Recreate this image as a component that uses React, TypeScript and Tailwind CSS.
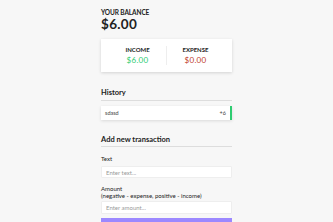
import React from 'react'

const App = () => {
  return (
    <div className="min-h-screen bg-[#f7f7f7] font-['Lato','Liberation_Sans',sans-serif] text-[#222]">
      <div className="mx-auto w-[131px] pt-[9px] pb-[10px]">
        <h4 className="text-[6.5px] font-bold uppercase leading-[8px] tracking-[-0.1px]">Your Balance</h4>
        <h1 className="text-[13.5px] font-bold leading-[14px] tracking-[0.3px]">$6.00</h1>

        <div className="mt-[8px] flex bg-white px-[8px] py-[7px] shadow-[0_1px_3px_rgba(0,0,0,0.15)]">
          <div className="flex-1 border-r border-[#eee] text-center">
            <h4 className="text-[6px] font-bold uppercase leading-[8px]">Income</h4>
            <p className="mt-[1px] text-[8px] leading-[10px] tracking-[0.3px] text-[#2ecc71]">$6.00</p>
          </div>
          <div className="flex-1 text-center">
            <h4 className="text-[6px] font-bold uppercase leading-[8px]">Expense</h4>
            <p className="mt-[1px] text-[8px] leading-[10px] tracking-[0.3px] text-[#c0392b]">$0.00</p>
          </div>
        </div>

        <h3 className="mt-[16px] border-b border-[#ddd] pb-[3px] text-[7.5px] font-bold leading-[9px]">History</h3>
        <ul className="mt-[5px]">
          <li className="flex h-[14px] items-center justify-between border-r-2 border-[#2ecc71] bg-white px-[4px] text-[5.5px] text-[#444] shadow-[0_1px_3px_rgba(0,0,0,0.12)]">
            sdasd <span>+6</span>
          </li>
        </ul>

        <h3 className="mt-[15px] border-b border-[#ddd] pb-[2px] text-[7.5px] font-bold leading-[9px]">Add new transaction</h3>
        <form>
          <div className="mt-[8px]">
            <label className="block text-[6px] leading-[7px]">Text</label>
            <input
              type="text"
              placeholder="Enter text..."
              className="mt-[4px] block h-[12px] w-full rounded-[1px] border border-[#eee] bg-white px-[4px] text-[6px] placeholder:text-[#999] outline-none"
            />
          </div>
          <div className="mt-[6.5px]">
            <label className="block text-[6px] leading-[7px]">
              Amount
              <br />
              (negative - expense, positive - income)
            </label>
            <input
              type="number"
              placeholder="Enter amount..."
              className="mt-[2.5px] block h-[13px] w-full rounded-[1px] border border-[#eee] bg-white px-[4px] text-[6px] placeholder:text-[#999] outline-none"
            />
          </div>
          <button className="mt-[4px] block h-[22px] w-full bg-[#9c88ff] text-[6px] text-white">Add transaction</button>
        </form>
      </div>
    </div>
  )
}

export default App
